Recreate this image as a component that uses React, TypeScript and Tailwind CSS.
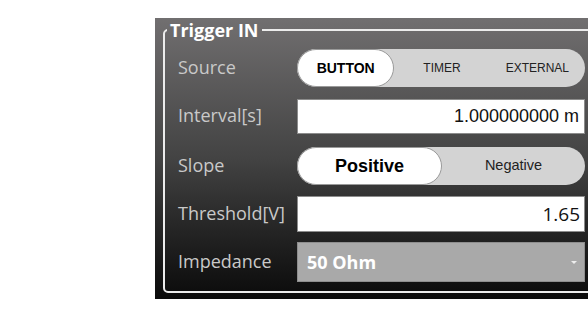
import { ReactNode } from 'react'

const label = "text-[18px] text-[#c9c9c9] font-['Open_Sans',sans-serif] leading-none"

function Row({ name, children, className = '' }: { name: string; children: ReactNode; className?: string }) {
  return (
    <div className={`flex items-center ${className}`}>
      <div className={`w-[119px] shrink-0 pb-[3px] ${label}`}>{name}</div>
      <div className="w-[288px] shrink-0">{children}</div>
    </div>
  )
}

function Segmented({ options, active, wide }: { options: string[]; active: number; wide?: boolean }) {
  return (
    <div className="flex h-[38px] rounded-full bg-[#d3d3d3] font-['Liberation_Sans',Arial,sans-serif]">
      {options.map((opt, i) =>
        i === active ? (
          <div
            key={opt}
            className={`flex flex-1 items-center justify-center rounded-full border border-[#9a9a9a] bg-white font-bold text-black ${
              wide ? 'text-[18px]' : 'text-[14px]'
            }`}
          >
            {opt}
          </div>
        ) : (
          <div
            key={opt}
            className={`flex flex-1 items-center justify-center text-[#222] ${wide ? 'text-[14.5px]' : 'text-[12px]'}`}
          >
            {opt}
          </div>
        )
      )}
    </div>
  )
}

export default function App() {
  return (
    <div className="h-[315px] w-[588px] overflow-hidden bg-white">
      <div className="ml-[155px] mt-[18px] h-[281px] w-[450px] bg-gradient-to-b from-[#716f70] via-[#434343] to-[#0b0b0b] pl-[8px] pt-[1px]">
        <fieldset className="h-[274px] rounded-[5px] border-2 border-[#ececec] pb-[8px] pl-[13px] pt-[8px]">
          <legend className="ml-[-11px] px-[3px] text-[18px] font-bold leading-[22px] text-white font-['Open_Sans',sans-serif]">
            Trigger IN
          </legend>
          <div className="flex flex-col">
            <Row name="Source">
              <Segmented options={['BUTTON', 'TIMER', 'EXTERNAL']} active={0} />
            </Row>
            <Row name="Interval[s]" className="mt-[12px]">
              <div className="flex h-[35px] items-center justify-end border border-[#8c8c8c] bg-white pr-[5px] text-[18px] text-[#111] font-['Liberation_Sans',Arial,sans-serif]">
                1.000000000 m
              </div>
            </Row>
            <Row name="Slope" className="mt-[13px]">
              <Segmented options={['Positive', 'Negative']} active={0} wide />
            </Row>
            <Row name="Threshold[V]" className="mt-[11px]">
              <div className="flex h-[36px] items-center justify-end border border-[#8c8c8c] bg-white pr-[4px] text-[19px] text-[#111] font-['Open_Sans',sans-serif]">
                1.65
              </div>
            </Row>
            <Row name="Impedance" className="mt-[10px]">
              <div className="flex h-[40px] items-center justify-between border border-[#8e8e8e] bg-[#a9a9a9] pl-[9px] pr-[6px]">
                <span className="text-[18px] font-bold text-white font-['Open_Sans',sans-serif]">50 Ohm</span>
                <svg width="8" height="5" viewBox="0 0 8 5">
                  <path d="M1 1h6L4 4z" fill="#eeeeee" />
                </svg>
              </div>
            </Row>
          </div>
        </fieldset>
      </div>
    </div>
  )
}
